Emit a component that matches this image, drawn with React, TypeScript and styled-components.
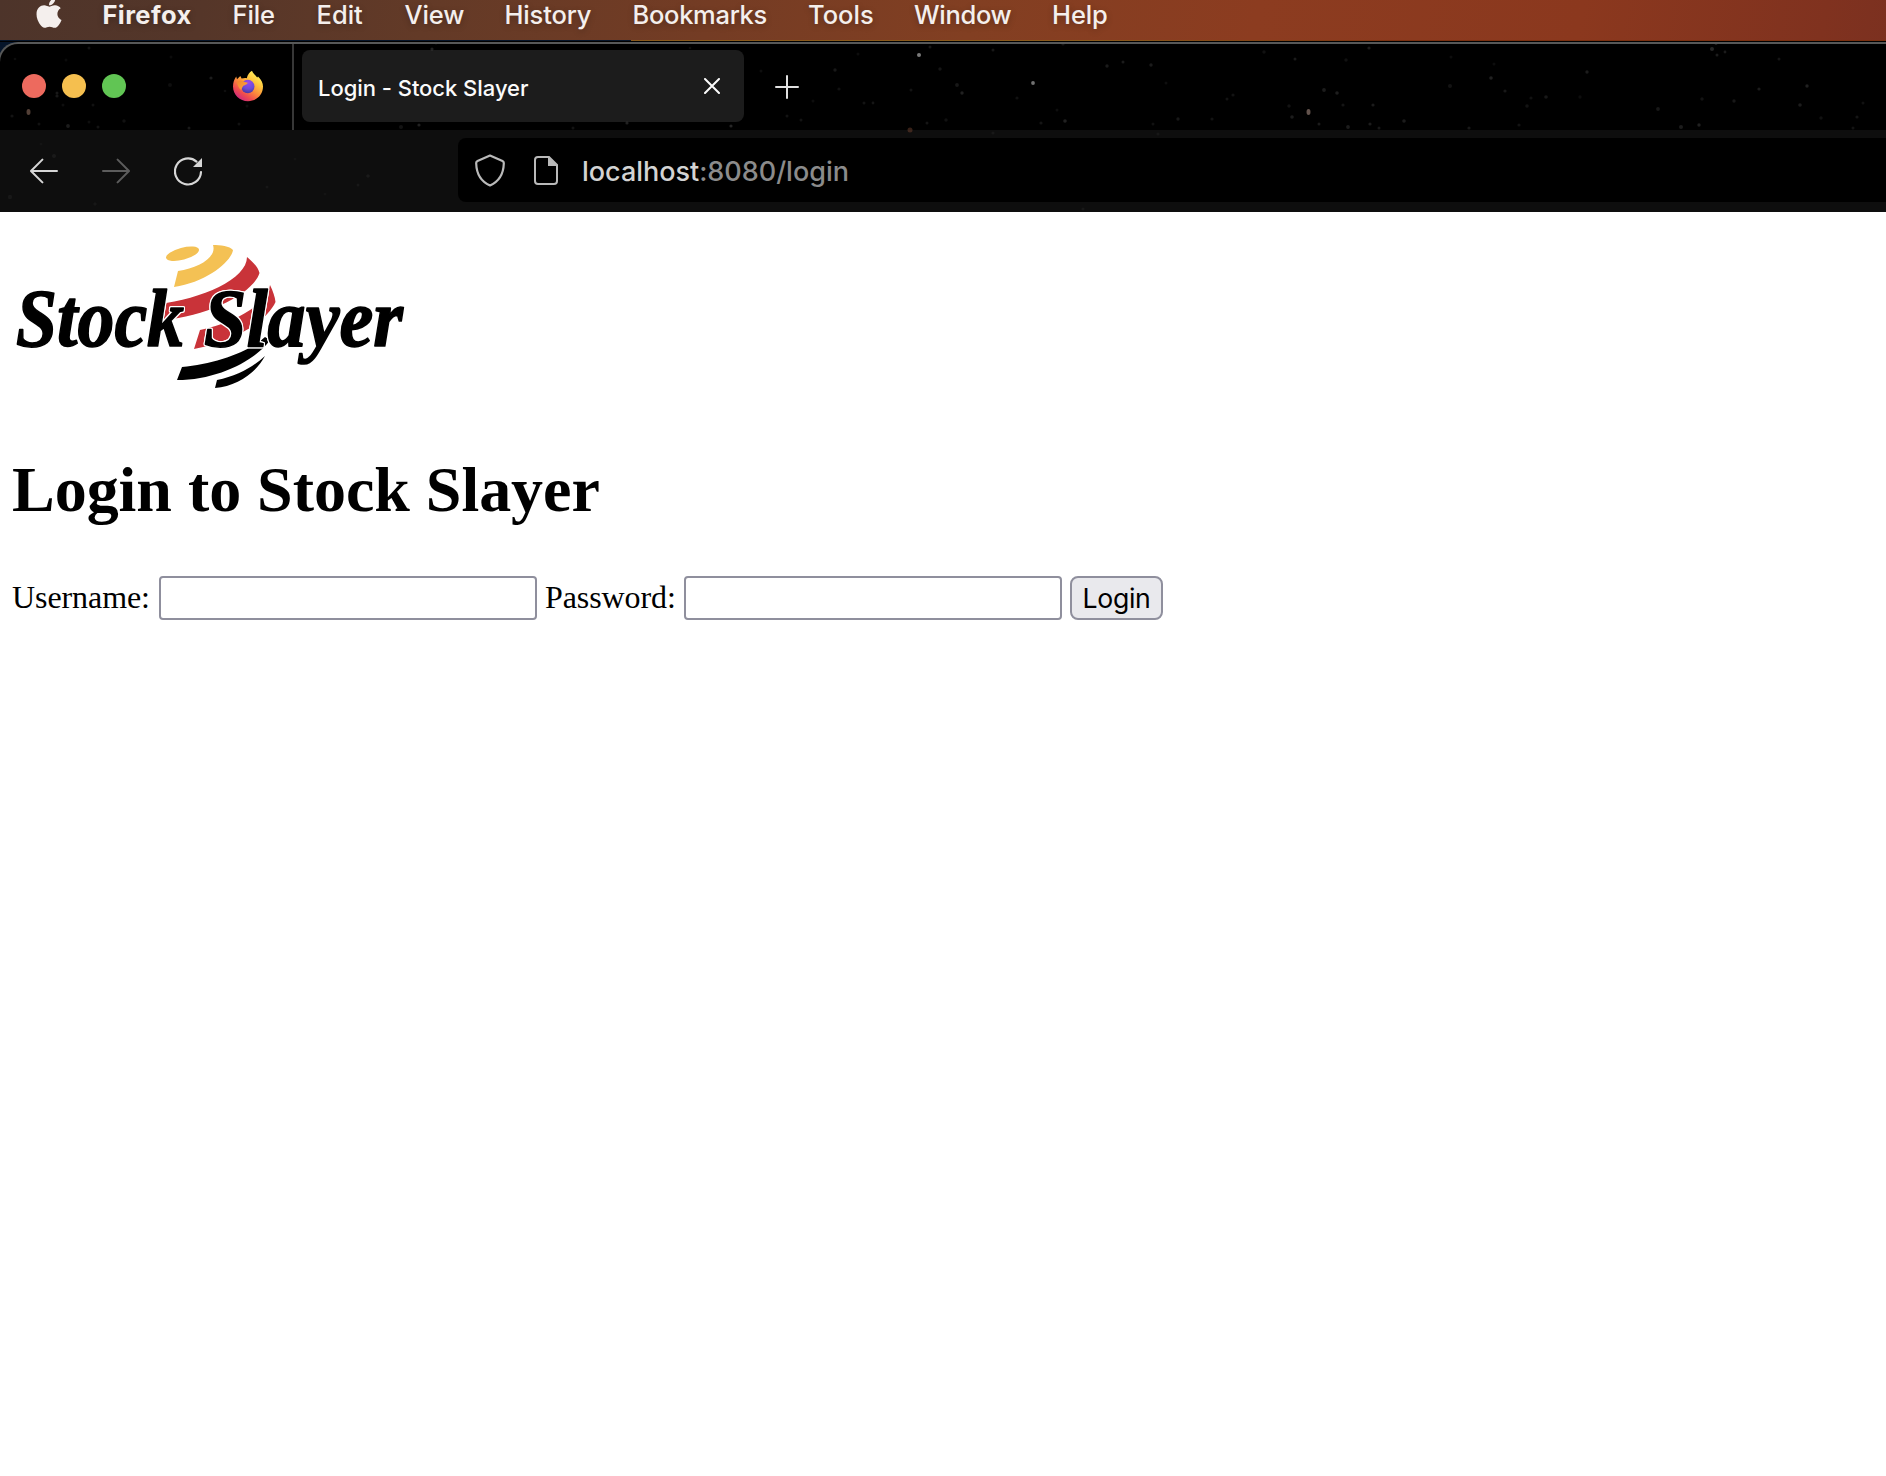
import React from "react";
import styled, { createGlobalStyle } from "styled-components";
import { FaApple } from "react-icons/fa";

const GlobalStyle = createGlobalStyle`
  html, body { margin: 0; padding: 0; background: #fff; }
  * { box-sizing: border-box; }
`;

const Screen = styled.div`
  width: 1886px;
  height: 1476px;
  overflow: hidden;
  background: #fff;
  display: flex;
  flex-direction: column;
`;

const MenuBar = styled.nav`
  flex: none;
  height: 40px;
  display: flex;
  align-items: flex-start;
  background: linear-gradient(100deg, #4d342a 0px, #553629 200px, #633a27 420px, #743c24 700px, #823f22 960px, #8c3c20 1240px, #8b381e 1560px, #80321f 1800px, #7a3020 1886px);
  font-family: Inter, "Liberation Sans", sans-serif;
  color: #f4efed;
  padding-left: 35px;
  text-shadow: 0 2px 6px rgba(0, 0, 0, 0.25);
`;

const AppleMark = styled.div`
  width: 67.5px;
  height: 40px;
  flex: none;
  svg { display: block; margin-top: -4px; margin-left: -3px; }
`;

const MenuItem = styled.span<{ $w: number; $ls: number; $bold?: boolean }>`
  flex: none;
  width: ${(p) => p.$w}px;
  font-size: 25.5px;
  line-height: 30px;
  white-space: nowrap;
  letter-spacing: ${(p) => p.$ls}px;
  font-weight: ${(p) => (p.$bold ? 700 : 480)};
`;

const WindowGap = styled.div`
  flex: none;
  height: 2px;
  background: linear-gradient(90deg, #06152a 0 631px, #8a5a1c 631px 1100px, #7a3010 1400px) 0 0 / 100% 1px no-repeat, #000;
`;

const ChromeFrame = styled.header`
  flex: none;
  height: 170px;
  background: #06152a;
`;

const Chrome = styled.div`
  position: relative;
  height: 170px;
  width: 1910px;
  background: #000;
  border-top: 2px solid #575858;
  border-left: 2px solid #575858;
  border-top-left-radius: 20px;
  margin-left: -2px;
  overflow: hidden;
`;

const Stars = styled.svg`
  position: absolute;
  left: 0;
  top: -2px;
  width: 1886px;
  height: 170px;
  pointer-events: none;
`;

const TabStrip = styled.div`
  height: 86px;
  display: flex;
  align-items: center;
`;

const Lights = styled.div`
  display: flex;
  gap: 16px;
  padding-left: 22px;
  margin-bottom: 2px;
  width: 232px;
  flex: none;
`;

const Light = styled.i<{ $c: string }>`
  width: 24px;
  height: 24px;
  border-radius: 50%;
  background: ${(p) => p.$c};
`;

const PinnedIcon = styled.div`
  width: 60px;
  flex: none;
  height: 32px;
  margin-bottom: 3px;
  svg { display: block; }
`;

const Divider = styled.div`
  width: 2px;
  height: 86px;
  background: #373737;
  flex: none;
`;

const Tab = styled.div`
  flex: none;
  width: 442px;
  height: 72px;
  margin: 0 0 2px 8px;
  border-radius: 8px;
  background: #1c1c1c;
  display: flex;
  align-items: center;
  justify-content: space-between;
  padding: 0 24px 0 16px;
  color: #fbfbfb;
  font: 500 22px/30px Inter, "Liberation Sans", sans-serif;
`;

const TabTitle = styled.span`
  padding-top: 3px;
  letter-spacing: -0.04px;
`;

const NewTab = styled.div`
  margin-left: 31px;
  height: 24px;
  svg { display: block; }
`;

const Toolbar = styled.div`
  height: 82px;
  background: #0e0e0e;
  display: flex;
  align-items: center;
`;

const NavButtons = styled.div`
  width: 458px;
  flex: none;
  display: flex;
  align-items: center;
  gap: 44px;
  padding: 0 0 0 30px;
  svg { display: block; }
`;

const UrlBar = styled.div`
  flex: 1;
  height: 64px;
  margin-bottom: 2px;
  border-radius: 8px 0 0 8px;
  background: #000;
  display: flex;
  align-items: center;
  padding-left: 17px;
  font: 450 27px/36px Inter, "Liberation Sans", sans-serif;
  color: #8b8b8b;
`;

const UrlIcons = styled.div`
  display: flex;
  align-items: center;
  gap: 29px;
  width: 107px;
  flex: none;
  svg { display: block; }
`;

const Url = styled.span`
  letter-spacing: -0.02px;
  padding-top: 4px;
`;

const Host = styled.span`
  color: #d3d3d3;
`;

const Page = styled.main`
  flex: 1;
  background: #fff;
  color: #000;
  font-family: "Liberation Serif", "Times New Roman", serif;
  padding: 16px 12px;
`;

const Logo = styled.svg`
  display: block;
  width: 400px;
  height: 180px;
  overflow: visible;
`;

const LogoWord = styled.text`
  font: italic 700 83px "Liberation Serif", "Times New Roman", serif;
  fill: #000;
  stroke: #000;
  stroke-width: 1.6px;
  stroke-linejoin: round;
  filter: drop-shadow(1px 0 0 #fff) drop-shadow(-1px 0 0 #fff) drop-shadow(0 1px 0 #fff) drop-shadow(0 -1px 0 #fff);
`;

const Title = styled.h1`
  margin: 45px 0 0;
  font-size: 64px;
  line-height: 74px;
  font-weight: 700;
  white-space: nowrap;
  letter-spacing: -0.03px;
`;

const LoginForm = styled.form`
  margin-top: 49px;
  display: flex;
  align-items: center;
  height: 44px;
`;

const Label = styled.label<{ $w: number }>`
  width: ${(p) => p.$w}px;
  flex: none;
  font-size: 32px;
  line-height: 44px;
  margin-top: -2px;
  letter-spacing: -0.08px;
  white-space: nowrap;
`;

const Field = styled.input`
  flex: none;
  width: 378px;
  height: 44px;
  margin: 0 8px 0 0;
  padding: 2px 4px;
  border: 2px solid #8f8f9d;
  border-radius: 4px;
  background: #fff;
  outline: none;
`;

const Submit = styled.button`
  width: 93px;
  height: 44px;
  padding: 0;
  border: 2px solid #8f8f9d;
  border-radius: 8px;
  background: #e9e9ed;
  color: #000;
  font: 400 26.67px/36px Inter, "Liberation Sans", sans-serif;
  letter-spacing: -0.3px;
`;

const menus: { label: string; w: number; ls: number; bold?: boolean }[] = [
  { label: "Firefox", w: 130, ls: 0.4, bold: true },
  { label: "File", w: 84, ls: -0.1 },
  { label: "Edit", w: 88, ls: 0 },
  { label: "View", w: 100, ls: -0.1 },
  { label: "History", w: 128, ls: -0.15 },
  { label: "Bookmarks", w: 175.5, ls: -0.3 },
  { label: "Tools", w: 106, ls: 0 },
  { label: "Window", w: 138, ls: -0.3 },
  { label: "Help", w: 80, ls: -0.1 },
];

// x, y (from the top of the window frame), radius, opacity
const stars: [number, number, number, number][] = [
  [89, 6, 1.5, 0.2], [66, 18, 1.5, 0.12], [15, 17, 1.3, 0.14], [171, 15, 1.5, 0.12], [211, 36, 1.6, 0.3],
  [170, 43, 2, 0.15], [57, 51, 1.5, 0.25], [57, 54, 1.6, 0.25], [225, 49, 1.3, 0.15], [63, 63, 1.5, 0.15],
  [93, 63, 1.5, 0.18], [12, 74, 1.6, 0.2], [39, 82, 1.5, 0.18], [68, 84, 1.9, 0.3], [89, 80, 1.5, 0.15],
  [124, 79, 1.7, 0.18], [98, 85, 1.5, 0.2], [189, 86, 1.5, 0.25], [247, 64, 1.5, 0.15], [239, 82, 1.5, 0.18],
  [401, 85, 2, 0.2], [419, 83, 1.6, 0.35], [573, 86, 1.5, 0.2], [627, 81, 1.6, 0.35], [731, 84, 1.6, 0.4],
  [432, 7, 1.6, 0.35], [436, 1, 1.4, 0.3], [690, 6, 1.3, 0.15], [761, 29, 1.5, 0.15], [835, 28, 1.7, 0.25],
  [839, 47, 1.6, 0.18], [813, 59, 1.5, 0.13], [787, 74, 1.5, 0.2], [864, 61, 1.5, 0.2], [873, 61, 1.4, 0.22],
  [801, 78, 1.5, 0.2], [858, 12, 1.5, 0.13], [919, 13, 2, 0.65], [930, 5, 1.5, 0.25], [940, 27, 1.7, 0.22],
  [993, 8, 1.5, 0.25], [1063, 2, 1.6, 0.25], [957, 43, 1.9, 0.25], [962, 51, 1.7, 0.35], [911, 48, 1.5, 0.2],
  [1033, 41, 1.9, 0.6], [1017, 56, 1.6, 0.18], [1107, 24, 1.7, 0.28], [1123, 20, 1.5, 0.28], [1151, 23, 1.7, 0.28],
  [1065, 79, 1.8, 0.35], [1041, 81, 1.6, 0.22], [946, 78, 1.7, 0.18], [927, 81, 1.5, 0.22], [1057, 68, 1.5, 0.15],
  [1178, 77, 1.7, 0.25], [1212, 77, 1.6, 0.2], [1153, 82, 1.5, 0.18], [1166, 41, 1.5, 0.15], [1233, 53, 1.6, 0.2],
  [1227, 57, 1.5, 0.2], [1264, 10, 1.7, 0.18], [1295, 17, 1.5, 0.28], [1346, 18, 1.7, 0.18], [1369, 6, 1.6, 0.3],
  [1324, 48, 1.9, 0.3], [1337, 51, 1.8, 0.32], [1343, 63, 1.6, 0.22], [1373, 63, 1.6, 0.3], [1289, 64, 1.7, 0.2],
  [1292, 75, 1.8, 0.3], [1319, 82, 1.5, 0.28], [1348, 85, 1.9, 0.3], [1370, 82, 1.6, 0.3], [1404, 79, 1.8, 0.3],
  [1379, 86, 1.5, 0.25], [1450, 44, 2, 0.2], [1451, 15, 1.5, 0.14], [1491, 36, 1.8, 0.35], [1505, 49, 1.6, 0.25],
  [1527, 64, 1.8, 0.2], [1531, 56, 1.6, 0.18], [1546, 55, 1.8, 0.25], [1580, 55, 1.7, 0.14], [1587, 30, 1.7, 0.3],
  [1494, 22, 1.5, 0.13], [1469, 86, 1.6, 0.25], [1519, 83, 1.6, 0.2], [1658, 67, 1.9, 0.25], [1681, 85, 2, 0.3],
  [1699, 83, 1.7, 0.35], [1712, 7, 2, 0.4], [1716, 1, 1.7, 0.5], [1717, 13, 1.5, 0.3], [1725, 10, 1.4, 0.28],
  [1702, 57, 1.7, 0.2], [1734, 59, 1.7, 0.25], [1759, 47, 1.6, 0.3], [1779, 17, 1.5, 0.22], [1807, 44, 1.7, 0.35],
  [1800, 63, 1.8, 0.3], [1821, 76, 1.7, 0.18], [1857, 75, 1.6, 0.22], [1853, 86, 1.5, 0.2], [1863, 61, 1.5, 0.18],
  [54, 114, 2, 0.13], [41, 102, 1.5, 0.08], [10, 155, 2.2, 0.12], [95, 162, 1.7, 0.1], [295, 117, 1.5, 0.08],
  [368, 134, 1.8, 0.14], [358, 143, 1.5, 0.12], [267, 145, 1.5, 0.1], [325, 152, 1.5, 0.08], [993, 91, 1.6, 0.12],
  [1083, 167, 1.6, 0.12], [1158, 92, 1.6, 0.1],
];

const ArrowIcon = ({ forward }: { forward?: boolean }) => (
  <svg width="28" height="26" viewBox="0 0 28 26" fill="none" stroke={forward ? "#5c5c5c" : "#d6d6d6"} strokeWidth="2" strokeLinecap="round" strokeLinejoin="round">
    {forward ? <path d="M1 13H26.5M15.6 1.6L27 13L15.6 24.4" /> : <path d="M27 13H1.5M12.4 1.6L1 13L12.4 24.4" />}
  </svg>
);

const FirefoxMark = () => (
  <svg width="32" height="32" viewBox="0 0 32 32">
    <defs>
      <linearGradient id="fxBody" x1="0.85" y1="0.1" x2="0.25" y2="0.95">
        <stop offset="0" stopColor="#fff25a" />
        <stop offset="0.3" stopColor="#ffc23c" />
        <stop offset="0.55" stopColor="#fb8a3c" />
        <stop offset="0.8" stopColor="#ef4a50" />
        <stop offset="1" stopColor="#cf2a7c" />
      </linearGradient>
      <radialGradient id="fxGlobe" cx="0.55" cy="0.2" r="0.8">
        <stop offset="0" stopColor="#9a48ec" />
        <stop offset="0.6" stopColor="#6a4bd8" />
        <stop offset="1" stopColor="#4a389f" />
      </radialGradient>
      <linearGradient id="fxHead" x1="0" y1="0" x2="1" y2="1">
        <stop offset="0" stopColor="#f2842e" />
        <stop offset="1" stopColor="#fba93c" />
      </linearGradient>
    </defs>
    <path fill="url(#fxBody)" d="M20 0.8C21 3.6 23 4.8 25.2 7.4L26 6.4C29.5 9.5 31 13 31 16.6C31 25 24.3 31.3 16 31.3S1 25 1 16.6C1 12.6 2.2 9.3 4.2 6.6L5 9.2L8.3 6L9.6 8.6C11.5 8 13.2 7.8 14.8 8.2C15.6 4.8 17.4 2.2 20 0.8Z" />
    <circle cx="15.8" cy="16.5" r="6.7" fill="url(#fxGlobe)" />
    <path fill="url(#fxHead)" d="M4.8 12.2C7 10 10 10.2 12 11.8L15.8 12.7C15 15 12 14.8 11 16.2C10.2 17.2 9.8 18.4 9.2 20C6.6 18.4 5.8 15 4.8 12.2Z" />
  </svg>
);

const BrandLogo = () => (
  <Logo viewBox="12 228 400 180">
    <ellipse cx="182.5" cy="253.7" rx="17" ry="6" transform="rotate(-15 182.5 253.7)" fill="#f4c154" />
    <path fill="#f4c154" d="M213 245C220 245 230 246 233 250C231 262 207 282 174 287L178 271C199 268 217 257 213 245Z" />
    <path fill="#c93339" d="M247 257C253 262 258 267 259.500 273C254 292 210 316 163 320L158 304C202 299 247 279 247 257Z" />
    <path fill="#c93339" d="M270 285C273 291 275 297 275.500 302C267 321 234 342 194 349L200 330C232 324 267 305 270 285Z" />
    <path fill="#000" d="M182 367C214 364 249 352 265 337L270 340C257 359 219 380 177 380Z" />
    <path fill="#000" d="M217 380C238 376 254 366 265 356C256 373 237 386 215 388Z" />
    <LogoWord x="16" y="346" textLength="168" lengthAdjust="spacingAndGlyphs">Stock</LogoWord>
    <LogoWord x="204" y="346" textLength="199" lengthAdjust="spacingAndGlyphs">Slayer</LogoWord>
  </Logo>
);

export default function App() {
  return (
    <>
      <GlobalStyle />
      <Screen>
        <MenuBar>
          <AppleMark><FaApple size={34} /></AppleMark>
          {menus.map((m) => (
            <MenuItem key={m.label} $w={m.w} $ls={m.ls} $bold={m.bold}>{m.label}</MenuItem>
          ))}
        </MenuBar>
        <WindowGap />
        <ChromeFrame>
          <Chrome>
            <TabStrip>
              <Lights>
                <Light $c="#ed6a5e" />
                <Light $c="#f5bf4f" />
                <Light $c="#61c554" />
              </Lights>
              <PinnedIcon><FirefoxMark /></PinnedIcon>
              <Divider />
              <Tab>
                <TabTitle>Login - Stock Slayer</TabTitle>
                <svg width="16" height="16" viewBox="0 0 16 16" stroke="#fbfbfb" strokeWidth="2" strokeLinecap="round"><path d="M1 1L15 15M15 1L1 15" /></svg>
              </Tab>
              <NewTab>
                <svg width="24" height="24" viewBox="0 0 24 24" stroke="#e0e0e0" strokeWidth="2" strokeLinecap="round"><path d="M12 1V23M1 12H23" /></svg>
              </NewTab>
            </TabStrip>
            <Toolbar>
              <NavButtons>
                <ArrowIcon />
                <ArrowIcon forward />
                <svg width="29" height="29" viewBox="0 0 29 29" fill="none">
                  <path d="M27 15A13 13 0 1 1 22.5 4.6" stroke="#d6d6d6" strokeWidth="2.2" strokeLinecap="round" />
                  <path d="M28 1V10H19Z" fill="#d6d6d6" />
                </svg>
              </NavButtons>
              <UrlBar>
                <UrlIcons>
                  <svg width="30" height="33" viewBox="0 0 30 33" fill="none" stroke="#b9b9b9" strokeWidth="2.2" strokeLinejoin="round">
                    <path d="M15 1.5L27.5 7Q29 7.7 28.8 9.5C28.5 19 24 27.5 15 31.5C6 27.5 1.5 19 1.2 9.5Q1 7.7 2.5 7Z" />
                  </svg>
                  <svg width="24" height="30" viewBox="0 0 24 30" fill="none">
                    <path d="M4 2H15L23 10V26Q23 29 20 29H4Q1 29 1 26V5Q1 2 4 2Z" stroke="#b9b9b9" strokeWidth="2" />
                    <path d="M14 1.5L23.5 11H14Z" fill="#b9b9b9" />
                  </svg>
                </UrlIcons>
                <Url><Host>localhost</Host>:8080/login</Url>
              </UrlBar>
            </Toolbar>
            <Stars viewBox="0 0 1886 170">
              {stars.map(([x, y, r, o], i) => <circle key={i} cx={x} cy={y} r={r} fill="#bdbdbd" opacity={o < 0.6 ? o * 0.5 : o} />)}
              <ellipse cx="28.5" cy="70" rx="2" ry="3" fill="#8a6a5c" opacity="0.6" />
              <ellipse cx="1308.5" cy="70" rx="2" ry="3" fill="#a58a80" opacity="0.6" />
              <ellipse cx="910" cy="88" rx="2.5" ry="2.5" fill="#7a4632" opacity="0.45" />
            </Stars>
          </Chrome>
        </ChromeFrame>
        <Page>
          <BrandLogo />
          <Title>Login to Stock Slayer</Title>
          <LoginForm onSubmit={(e) => e.preventDefault()}>
            <Label htmlFor="user" $w={147}>Username:</Label>
            <Field id="user" type="text" />
            <Label htmlFor="pass" $w={139}>Password:</Label>
            <Field id="pass" type="password" />
            <Submit type="submit">Login</Submit>
          </LoginForm>
        </Page>
      </Screen>
    </>
  );
}
